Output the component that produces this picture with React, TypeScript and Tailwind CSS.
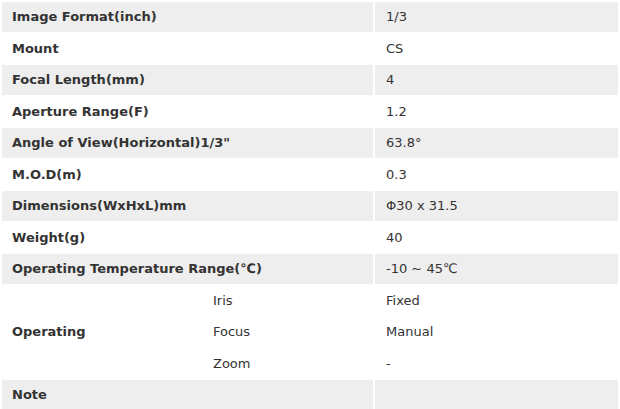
const rows: { label: string; value: string; shaded: boolean }[] = [
  { label: "Image Format(inch)", value: "1/3", shaded: true },
  { label: "Mount", value: "CS", shaded: false },
  { label: "Focal Length(mm)", value: "4", shaded: true },
  { label: "Aperture Range(F)", value: "1.2", shaded: false },
  { label: 'Angle of View(Horizontal)1/3"', value: "63.8°", shaded: true },
  { label: "M.O.D(m)", value: "0.3", shaded: false },
  { label: "Dimensions(WxHxL)mm", value: "Φ30 x 31.5", shaded: true },
  { label: "Weight(g)", value: "40", shaded: false },
  { label: "Operating Temperature Range(℃)", value: "-10 ~ 45℃", shaded: true },
];

const operating = [
  { label: "Iris", value: "Fixed" },
  { label: "Focus", value: "Manual" },
  { label: "Zoom", value: "-" },
];

export default function App() {
  return (
    <div className="w-[620px] h-[409px] overflow-hidden bg-white text-[13px] text-[#333] font-['DejaVu_Sans',sans-serif]">
      <div className="grid grid-cols-[199px_170px_243px] gap-[2px] p-[2px] auto-rows-[29.5px]">
        {rows.map((r) => (
          <SpecRow key={r.label} {...r} />
        ))}

        <div className="row-span-3 flex items-center px-[10px] font-bold">Operating</div>
        {operating.map((o) => (
          <Sub key={o.label} label={o.label} value={o.value} />
        ))}

        <SpecRow label="Note" value="" shaded />
      </div>
    </div>
  );
}

function SpecRow({ label, value, shaded }: { label: string; value: string; shaded: boolean }) {
  const bg = shaded ? "bg-[#eeeeee]" : "";
  return (
    <>
      <div className={`col-span-2 flex items-center px-[10px] font-bold ${bg}`}>{label}</div>
      <div className={`flex items-center px-[11px] ${bg}`}>{value}</div>
    </>
  );
}

function Sub({ label, value }: { label: string; value: string }) {
  // first sub row sits next to the spanning "Operating" cell
  return (
    <>
      <div className="col-start-2 flex items-center px-[10px]">{label}</div>
      <div className="flex items-center px-[11px]">{value}</div>
    </>
  );
}
